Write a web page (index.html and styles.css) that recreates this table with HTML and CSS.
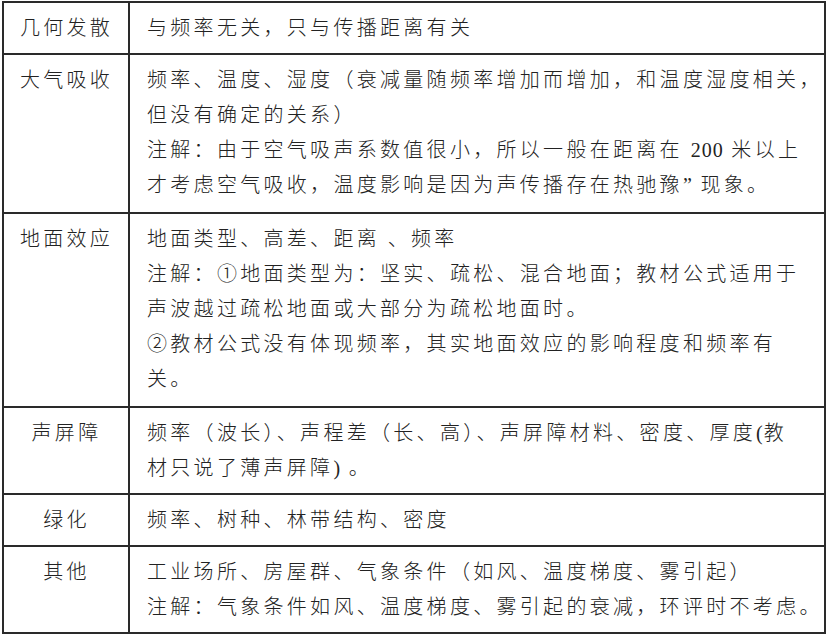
FILE: index.html
```html
<!DOCTYPE html>
<html lang="zh">
<head>
<meta charset="utf-8">
<link rel="stylesheet" href="styles.css">
</head>
<body>
<table class="grid">
  <colgroup>
    <col class="c-name">
    <col class="c-desc">
  </colgroup>
  <tr>
    <td class="name">几何发散</td>
    <td class="desc"><div class="ln">与频率无关，只与传播距离有关</div></td>
  </tr>
  <tr class="tall">
    <td class="name">大气吸收</td>
    <td class="desc">
      <div class="ln">频率、温度、湿度（衰减量随频率增加而增加，和温度湿度相关，</div>
      <div class="ln">但没有确定的关系）</div>
      <div class="ln">注解：由于空气吸声系数值很小，所以一般在距离在 <span class="num">200</span> 米以上</div>
      <div class="ln">才考虑空气吸收，温度影响是因为声传播存在热驰豫<span class="num">”</span> 现象。</div>
    </td>
  </tr>
  <tr class="tall">
    <td class="name">地面效应</td>
    <td class="desc">
      <div class="ln">地面类型、高差、距离 、频率</div>
      <div class="ln">注解：①地面类型为：坚实、疏松、混合地面；教材公式适用于</div>
      <div class="ln">声波越过疏松地面或大部分为疏松地面时。</div>
      <div class="ln">②教材公式没有体现频率，其实地面效应的影响程度和频率有</div>
      <div class="ln">关。</div>
    </td>
  </tr>
  <tr>
    <td class="name">声屏障</td>
    <td class="desc">
      <div class="ln">频率（波长）、声程差（长、高）、声屏障材料、密度、厚度<span class="num">(</span>教</div>
      <div class="ln">材只说了薄声屏障<span class="num">)</span> 。</div>
    </td>
  </tr>
  <tr>
    <td class="name">绿化</td>
    <td class="desc"><div class="ln">频率、树种、林带结构、密度</div></td>
  </tr>
  <tr>
    <td class="name">其他</td>
    <td class="desc">
      <div class="ln">工业场所、房屋群、气象条件（如风、温度梯度、雾引起）</div>
      <div class="ln">注解：气象条件如风、温度梯度、雾引起的衰减，环评时不考虑。</div>
    </td>
  </tr>
</table>
</body>
</html>
```

FILE: styles.css
```css
html, body {
  margin: 0;
  padding: 0;
  background: #ffffff;
}
body {
  padding: 1px 0 0 2px;
  font-family: "Noto Sans CJK SC", "Noto Sans", sans-serif;
  font-weight: 300;
  color: #222;
}
.grid {
  border-collapse: collapse;
  width: 822px;
  table-layout: fixed;
}
.c-name { width: 126px; }
.c-desc { width: 696px; }
.grid td {
  border: 2px solid #2a2a2a;
  vertical-align: top;
  padding: 6px 0 9px 0;
  font-size: 20px;
  line-height: 35px;
  letter-spacing: 3.3px;
}
.grid td.name {
  text-align: center;
  padding-left: 1px;
}
.grid td.desc {
  padding-left: 17px;
}
.grid tr.tall td {
  padding-bottom: 11px;
}
.ln {
  white-space: nowrap;
}
.num {
  font-family: "Liberation Serif", serif;
  font-weight: 400;
  letter-spacing: 1px;
  line-height: 16px;
}
```
